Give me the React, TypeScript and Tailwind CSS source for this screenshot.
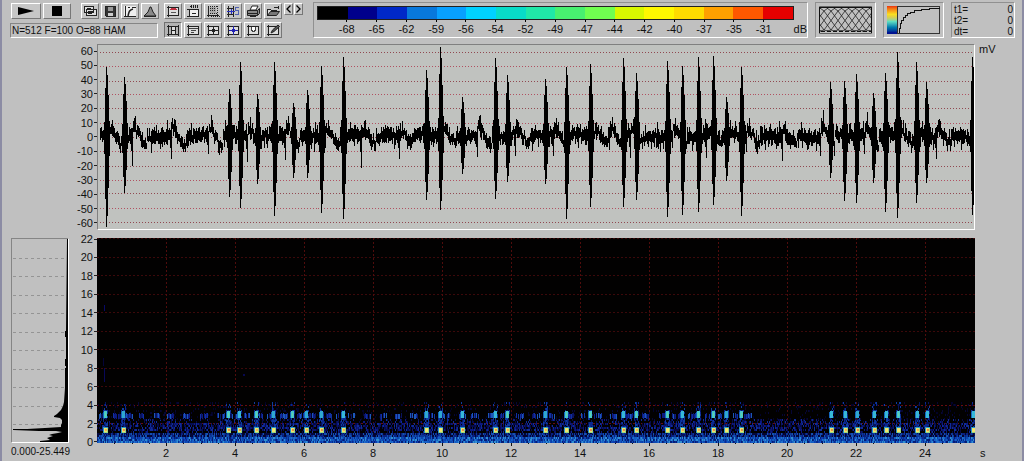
import type { ReactNode } from "react";

const PLOT_W = 878;
const WAVE_H = 186;
const SPEC_H = 205;
const DURATION = 25.449;
const ZERO_Y = 92;

const scale = [
  { color: "#000000", label: "-68" },
  { color: "#00008c", label: "-65" },
  { color: "#0028c8", label: "-62" },
  { color: "#0878dc", label: "-59" },
  { color: "#08a0ff", label: "-56" },
  { color: "#00d2ff", label: "-54" },
  { color: "#08dcc8", label: "-52" },
  { color: "#20e8a8", label: "-49" },
  { color: "#48f070", label: "-47" },
  { color: "#70ff50", label: "-44" },
  { color: "#d8f800", label: "-42" },
  { color: "#fff800", label: "-40" },
  { color: "#ffdc00", label: "-37" },
  { color: "#ffa000", label: "-35" },
  { color: "#ff5800", label: "-31" },
  { color: "#e60000", label: "" },
];

const millivolts = [60, 50, 40, 30, 20, 10, 0, -10, -20, -30, -40, -50, -60];
const kilohertz = [22, 20, 18, 16, 14, 12, 10, 8, 6, 4, 2, 0];
const seconds = [2, 4, 6, 8, 10, 12, 14, 16, 18, 20, 22, 24];

// [x, height above zero, depth below zero]
const calls = [
  [8, 70, 92], [26, 60, 58], [131, 48, 62], [142, 75, 73], [159, 42, 49],
  [176, 75, 81], [195, 33, 42], [209, 47, 42], [224, 71, 78], [246, 80, 84],
  [329, 67, 65], [343, 90, 75], [365, 39, 38], [398, 79, 64], [410, 62, 46],
  [448, 58, 49], [469, 70, 84], [493, 73, 72], [526, 79, 72], [539, 64, 65],
  [570, 76, 82], [585, 71, 80], [601, 80, 77], [616, 81, 70], [629, 39, 45],
  [644, 70, 81], [734, 55, 42], [748, 56, 66], [760, 63, 68], [777, 43, 48],
  [789, 64, 77], [801, 85, 83], [820, 75, 68], [830, 55, 48], [876, 80, 80],
];

// short background pulses: a dip followed by a rise and a slow decay
const pulses = [
  [11, 10, 16], [34, 30, 20], [73, 23, 17], [110, 18, 21], [149, 26, 19],
  [187, 24, 20], [228, 12, 16], [264, 32, 15], [302, 23, 15], [345, 10, 14],
  [380, 21, 21], [418, 20, 14], [456, 20, 18], [496, 10, 14], [512, 14, 19],
  [533, 22, 17], [575, 12, 18], [609, 22, 9], [649, 16, 18], [686, 25, 15],
  [724, 20, 26], [738, 20, 10], [768, 18, 24], [804, 8, 16], [840, 23, 17],
];

function createRandom(seed: number) {
  let state = seed;
  return () => {
    state = (state + 0x6d2b79f5) | 0;
    let t = Math.imul(state ^ (state >>> 15), 1 | state);
    t = (t + Math.imul(t ^ (t >>> 7), 61 | t)) ^ t;
    return ((t ^ (t >>> 14)) >>> 0) / 4294967296;
  };
}

function buildWave() {
  const random = createRandom(41);
  const high: number[] = [];
  const low: number[] = [];
  for (let x = 0; x < PLOT_W; x++) {
    const drift = 1.5 * Math.sin(x / 5) + (random() - 0.5) * 5;
    high.push(3 + random() * 5 + (random() > 0.7 ? random() * 8 : 0) + drift);
    low.push(3 + random() * 5 + (random() > 0.7 ? random() * 8 : 0) - drift);
  }
  for (const [x, dip, rise] of pulses) {
    for (let i = 1; i < 15 && x + i < PLOT_W; i++) {
      const drift = (rise / 2.4) * Math.cos((i / 14) * Math.PI) + (random() - 0.5) * 5;
      high[x + i] = high[x + i] * 0.8 + drift;
      low[x + i] = low[x + i] * 0.8 - drift;
    }
    high[x + 3] = rise;
    low[x] = dip;
    low[x - 1] = dip * 0.5;
  }
  const shape = [0.2, 0.7, 1, 0.88, 0.58, 0.22];
  for (const [x, up, down] of calls) {
    shape.forEach((k, i) => {
      const at = x + i - 2;
      if (at < 0 || at >= PLOT_W) return;
      high[at] = Math.max(high[at], up * k);
      low[at] = Math.max(low[at], down * k);
    });
  }
  let d = "";
  for (let x = 2; x < PLOT_W; x++) {
    const top = Math.round(ZERO_Y - high[x]);
    const bottom = Math.max(top + 4, Math.round(ZERO_Y + low[x]));
    d += `M${x} ${top}V${bottom}h1V${top}z`;
  }
  return d;
}

function buildSpectrogram() {
  const random = createRandom(7);
  const layers: { color: string; d: string }[] = [];
  const dot = (color: string, x: number, y: number, w = 1, h = 2) => {
    const d = `M${x} ${y}h${w}v${h}h-${w}z`;
    const same = layers.find((layer) => layer.color === color);
    if (same) same.d += d;
    else layers.push({ color, d });
  };
  const pick = (colors: string[]) => colors[Math.floor(random() * colors.length)];

  for (let x = 0; x < PLOT_W; x++) {
    for (let y = 195; y < 205; y += 2) {
      dot(
        y < 199
          ? pick(["#04083c", "#082080", "#0c3898", "#1450b0", "#040430"])
          : pick(["#0c3cb0", "#1458c0", "#2070cc", "#3090d0", "#0c48b0", "#041c78", "#1460c4", "#082c90"]),
        x,
        y
      );
    }
    for (let y = 181; y < 195; y += 2) {
      const density = y > 184 && y < 193 ? 0.62 : 0.28;
      if (random() < density) dot(pick(["#040c50", "#0c1880", "#102c98", "#080840", "#0c1468"]), x, y);
    }
    for (let y = 164; y < 181; y += 2) {
      if (random() < 0.1) dot(pick(["#020228", "#060634"]), x, y);
    }
  }

  // faint harmonics near 3 kHz
  for (let x = 2; x < 648; x += 12 + Math.floor(random() * 6)) {
    for (let i = 0; i < 8; i++) {
      if (random() < 0.8) dot(pick(["#0c1a80", "#1030a0", "#1c58b8", "#0a1460"]), x + i, 175 + Math.floor(random() * 2), 1, 5);
    }
  }

  for (const [x] of calls) {
    for (let y = 164; y < 197; y += 2) {
      for (let i = -2; i < 3; i++) {
        const near = y > 170 ? 0.65 : 0.2;
        if (random() < near) dot(pick(["#06145c", "#0a2890", "#0e3ca0"]), x + i, y);
      }
    }
    dot("#1468c0", x - 2, 174, 4, 6);
    dot(pick(["#38b8d8", "#30a8d0", "#48c8c8"]), x - 1, 173, 3, 7);
    dot("#68d0a8", x, 175, 1, 3);
    dot("#2898c8", x - 2, 189, 5, 6);
    dot("#98d880", x - 1, 190, 4, 5);
    dot("#f0e070", x - 1, 190, 3, 4);
    dot(pick(["#e89048", "#f8e868", "#f0b050"]), x, 191, 2, 2);
  }

  dot("#080868", 7, 67, 1, 6);
  dot("#080858", 7, 130, 1, 14);
  dot("#040438", 6, 120, 1, 8);
  dot("#080850", 146, 136, 2, 2);
  return layers;
}

const wavePath = buildWave();
const spectrogram = buildSpectrogram();

function ToolButton({
  label,
  pressed,
  className = "h-4 w-[18px]",
  children,
}: {
  label: string;
  pressed?: boolean;
  className?: string;
  children: ReactNode;
}) {
  const edge = pressed
    ? "border-t-[#707070] border-l-[#707070] border-r-white border-b-white bg-[#b4b4b4]"
    : "border-t-white border-l-white border-r-[#777777] border-b-[#777777] bg-[#c6c6c6]";
  return (
    <button
      type="button"
      aria-label={label}
      aria-pressed={pressed}
      className={`flex shrink-0 items-center justify-center border ${edge} ${className}`}
    >
      {children}
    </button>
  );
}

function Glyph({ children }: { children: ReactNode }) {
  return (
    <svg viewBox="0 0 14 13" className="h-[13px] w-3.5" fill="none" stroke="#222" shapeRendering="crispEdges" aria-hidden>
      {children}
    </svg>
  );
}

const frame = <path d="M2.5 1v11M1 10.5h12M12.5 2v9M1 2.5h12" />;
const paper = <path d="M3 3h9v7H3z" fill="#ddd" stroke="none" />;

const topTools: { label: string; icon: ReactNode }[] = [
  {
    label: "Options",
    icon: (
      <>
        {paper}
        {frame}
        <path d="M4 4.5h7M5 3.5h5" stroke="#c03040" />
        <path d="M5 7.5h5" stroke="#555" />
      </>
    ),
  },
  {
    label: "Time scale",
    icon: (
      <>
        <path d="M4 5h8v6H4z" fill="#eee" stroke="none" />
        <path d="M5.5 0v3M4 1.5h2M7.5 0v3M9.5 0v3M11.5 0v3M1 4.5h12M3.5 4v8M12.5 4v8M1 11.5h12M6 8.5h4" />
      </>
    ),
  },
  {
    label: "Select range",
    icon: (
      <>
        <path d="M4 2h6v7H4z" fill="#aaa" stroke="none" />
        <path d="M2.5 1v11M1 10.5h12" />
        <path d="M4 1.5h8M4 3.5h6M4 5.5h6M4 8.5h8M11.5 1v10M5 11.5h9" strokeDasharray="1 1" />
      </>
    ),
  },
  {
    label: "Synchronize",
    icon: (
      <>
        <path d="M2.5 1v11M1 3.5h6M1 9.5h6M7.5 1v11" />
        <path d="M1 6.5h8M5.5 4v5" stroke="#2830c0" />
        <path d="M13 2.5H9.5v3h3v4H9" stroke="#5060b0" />
      </>
    ),
  },
  {
    label: "Print",
    icon: (
      <>
        <path d="M4 5l2-4h6l-2 4z" fill="#fff" shapeRendering="auto" />
        <path d="M1.5 5.5h10v5h-10zM11.5 5.5l2-2v5l-2 2" fill="#888" shapeRendering="auto" />
        <path d="M2 8.5h9M4 11.5h6" />
      </>
    ),
  },
  {
    label: "Open",
    icon: (
      <>
        <path d="M1.5 10.5v-6h3l1 1h5v2" fill="#ddd" />
        <path d="M1.5 10.5l3-4h9l-3 4z" fill="#777" shapeRendering="auto" />
        <path d="M8 2.5h4M12.5 1v3" />
      </>
    ),
  },
];

const bottomTools: { label: string; icon: ReactNode }[] = [
  {
    label: "Vertical cursors",
    icon: (
      <>
        <path d="M6 2h3v8H6z" fill="#ddd" stroke="none" />
        <path d="M2.5 1v11M5.5 2v9M9.5 2v9M12.5 1v11M1 2.5h12M1 10.5h12M6 6.5h3" />
      </>
    ),
  },
  {
    label: "Horizontal cursors",
    icon: (
      <>
        {paper}
        {frame}
        <path d="M3 4.5h9M5 6.5h5M5 8.5h3" stroke="#444" />
      </>
    ),
  },
  {
    label: "Crosshair",
    icon: (
      <>
        {paper}
        {frame}
        <path d="M7.5 2v9M3 6.5h9M6.5 5v3M8.5 5v3" />
      </>
    ),
  },
  {
    label: "Crosshair pair",
    icon: (
      <>
        {paper}
        {frame}
        <path d="M7.5 2v9M3 6.5h9M6.5 5v3M8.5 5v3" stroke="#2020b0" />
      </>
    ),
  },
  {
    label: "Marker",
    icon: (
      <>
        {paper}
        {frame}
        <path d="M5.5 3v3l1 1h2l1-1V3" fill="#fff" stroke="#444" />
      </>
    ),
  },
  {
    label: "Annotate",
    icon: (
      <>
        {paper}
        {frame}
        <path d="M5 9l1.5-3L12 1l1.5 1.5L8 7.5z" fill="#555" shapeRendering="auto" />
      </>
    ),
  },
];

function Toolbar() {
  return (
    <div className="flex shrink-0 pt-px">
      <div className="flex w-[148px] flex-col justify-between">
        <div className="flex pl-px">
          <ToolButton label="Play" className="h-4 w-[30px]">
            <svg viewBox="0 0 16 8" className="h-2 w-4" aria-hidden>
              <path d="M0 0l16 4L0 8z" />
            </svg>
          </ToolButton>
          <ToolButton label="Stop" className="ml-0.5 h-4 w-7">
            <span className="size-2.5 bg-black" />
          </ToolButton>
          <div className="ml-2.5 flex gap-0.5">
            <ToolButton label="Copy window">
              <Glyph>
                <path d="M1.5 1.5h9v6h-9zM3.5 4.5h10v6h-10z" fill="#ddd" />
                <path d="M5 6.5h6M5 8.5h4M4 3.5h4" />
              </Glyph>
            </ToolButton>
            <ToolButton label="Save">
              <Glyph>
                <path d="M2.5 1.5h10v10h-9l-1-1z" fill="#333" />
                <path d="M5 2h5v4H5z" fill="#999" stroke="none" />
                <path d="M5 8h5v3H5z" fill="#ccc" stroke="none" />
              </Glyph>
            </ToolButton>
            <ToolButton label="Gain curve">
              <Glyph>
                <path d="M1 1h12v11H1z" fill="#eee" stroke="none" />
                <path d="M2.5 1v11M1 11.5h12M5 2.5h2M9 2.5h4" />
                <path d="M5 11c1-4 1-6 5-7" strokeWidth="1.5" shapeRendering="auto" />
              </Glyph>
            </ToolButton>
            <ToolButton label="Spectrum">
              <Glyph>
                <path d="M1 11l4-4 2-5h1l2 5 3 4z" fill="#888" shapeRendering="auto" />
                <path d="M1 11.5h12" />
              </Glyph>
            </ToolButton>
          </div>
        </div>
        <div className="border border-t-[#858585] border-r-white border-b-white border-l-[#858585] pl-px text-[10px] leading-[13px] whitespace-nowrap">
          N=512 F=100 O=88 HAM
        </div>
      </div>
      <div className="ml-1.5 grid grid-cols-6 content-between gap-0.5">
        {topTools.map((tool) => (
          <ToolButton key={tool.label} label={tool.label}>
            <Glyph>{tool.icon}</Glyph>
          </ToolButton>
        ))}
        {bottomTools.map((tool, i) => (
          <ToolButton key={tool.label} label={tool.label} pressed={i === 0}>
            <Glyph>{tool.icon}</Glyph>
          </ToolButton>
        ))}
      </div>
      <div className="ml-0.5 flex gap-px">
        <ToolButton label="Previous" className="h-3 w-[9px]">
          <svg viewBox="0 0 5 8" className="h-2 w-[5px]" fill="none" stroke="#000" strokeWidth="1.3" aria-hidden>
            <path d="M4.5 0.5L1 4l3.5 3.5" />
          </svg>
        </ToolButton>
        <ToolButton label="Next" className="h-3 w-[9px]">
          <svg viewBox="0 0 5 8" className="h-2 w-[5px]" fill="none" stroke="#000" strokeWidth="1.3" aria-hidden>
            <path d="M0.5 0.5L4 4L0.5 7.5" />
          </svg>
        </ToolButton>
      </div>
    </div>
  );
}

function Panel({ className, children }: { className: string; children: ReactNode }) {
  return (
    <div className={`border border-t-[#909090] border-r-white border-b-white border-l-[#909090] ${className}`}>
      {children}
    </div>
  );
}

function ColorScale() {
  return (
    <Panel className="ml-2.5 flex min-w-0 flex-1 pt-[3px] pl-[3px]">
      <div className="min-w-0 flex-1">
        <div className="flex border border-[#202020]">
          {scale.map(({ color }) => (
            <span key={color} className="h-3 flex-1" style={{ backgroundColor: color }} />
          ))}
        </div>
        <div className="flex">
          <span className="min-w-0 flex-1" />
          {scale.slice(0, 15).map(({ label }) => (
            <div key={label} className="flex min-w-0 flex-[2] flex-col items-center">
              <span className="h-0.5 w-px bg-black" />
              <span className="leading-[14px]">{label}</span>
            </div>
          ))}
          <span className="min-w-0 flex-1" />
        </div>
      </div>
      <span className="pt-4 leading-[14px]">dB</span>
    </Panel>
  );
}

function Lattice() {
  const lines = [-2, -1, 0, 1, 2, 3, 4, 5, 6, 7, 8];
  return (
    <Panel className="w-[61px] p-[3px]">
      <svg viewBox="0 0 53 28" className="h-7 w-full" fill="none" stroke="#222" aria-hidden>
        {lines.map((i) => (
          <path key={i} d={`M${i * 7 - 6} 2l4 3l14 19l4 1M${i * 7 + 16} 2l-4 3l-14 19l-4 1`} strokeWidth="0.8" />
        ))}
        <path d="M0.5 0.5h52v27h-52z" stroke="#666" />
        <path d="M0 1.5h53M0.5 1v26M52.5 1v26" stroke="#111" />
        <path d="M2 25.5h50" stroke="#111" strokeDasharray="4 2" />
      </svg>
    </Panel>
  );
}

function Transfer() {
  return (
    <Panel className="flex w-[61px] p-[3px]">
      <div className="h-7 w-2.5 bg-linear-to-b from-[#e03018] via-[#60e0c0] to-[#001090] from-5% via-55% to-95%">
        <div className="h-full bg-linear-to-b from-[#e83010] via-[#f8e020] via-30% to-transparent to-55%" />
      </div>
      <svg viewBox="0 0 43 28" className="h-7 flex-1" fill="none" stroke="#111" shapeRendering="crispEdges" aria-hidden>
        <path d="M0.5 0.5h42v27h-42z" stroke="#333" />
        <path d="M2.5 27v-5h1v-5h1v-3h2v-3h2v-2h2v-2h3v-1h4v-2h7v-1h8v-1h10" />
      </svg>
    </Panel>
  );
}

function Readout() {
  return (
    <Panel className="w-16 pt-px pr-px pl-0.5 text-[10px]">
      <dl className="grid grid-cols-[1fr_auto] leading-[11px]">
        {["t1=", "t2=", "dt="].map((name) => (
          <div key={name} className="contents">
            <dt>{name}</dt>
            <dd>0</dd>
          </div>
        ))}
      </dl>
    </Panel>
  );
}

function Axis({ values, className }: { values: number[]; className: string }) {
  return (
    <div className={`flex flex-col justify-between leading-[14px] ${className}`}>
      {values.map((value) => (
        <div key={value} className="flex items-center justify-end gap-px">
          <span>{value}</span>
          <span className="h-px w-[3px] bg-[#222]" />
        </div>
      ))}
    </div>
  );
}

function Waveform() {
  return (
    <div className="grid grid-cols-[95px_minmax(0,1fr)_47px]">
      <Axis values={millivolts} className="h-[186px]" />
      <div className="h-[186px] border border-t-[#808080] border-r-white border-b-white border-l-[#808080] bg-[#c0c2bf]">
        <svg
          viewBox={`0 0 ${PLOT_W} ${WAVE_H}`}
          preserveAspectRatio="none"
          className="h-full w-full"
          role="img"
          aria-label="Waveform"
        >
          {millivolts.map((mv, i) => (
            <path
              key={mv}
              d={`M2 ${Math.round(7 + (i * 172) / 12) + 0.5}H${PLOT_W}`}
              stroke={i % 2 ? "#b05060" : "#904850"}
              strokeDasharray="1 2"
              shapeRendering="crispEdges"
            />
          ))}
          <path d={wavePath} fill="#000" shapeRendering="crispEdges" />
        </svg>
      </div>
      <span className="pl-1 leading-[10px]">mV</span>
    </div>
  );
}

function AverageSpectrum() {
  return (
    <div className="mt-1.5 pl-[9px]">
      <div className="h-[205px] border border-t-[#858585] border-r-white border-b-white border-l-[#858585]">
        <svg viewBox="0 0 56 203" className="h-full w-full" preserveAspectRatio="none" aria-hidden>
          {kilohertz.slice(1, 11).map((khz, i) => (
            <path key={khz} d={`M1 ${Math.round((i + 1) * 18.5) + 0.5}h53`} stroke="#949494" strokeDasharray="3 3" />
          ))}
          <path d="M55 0h1v203H28v-1l10-1-3-2 6-2-4-1 3-1 6-1 4-1-6-1-17 0-26-1v-1l14 0 18-1 16-1v-2l1-2v-3l-2-2-6-1v-1l3-2 2-2 2-2 2-4 1-4 1-14v-20h1v-2h-1v-7h1v-22h-1v-6h1z" />
        </svg>
      </div>
      <div className="pt-[3px] text-[10px] leading-3 whitespace-nowrap">0.000-25.449</div>
    </div>
  );
}

function Spectrogram() {
  const pxPerSecond = PLOT_W / DURATION;
  const ticks = Array.from({ length: 50 }, (_, i) => (i + 1) / 2);
  return (
    <div className="mt-0.5 grid grid-cols-[67px_28px_minmax(0,1fr)_47px]">
      <AverageSpectrum />
      <Axis values={kilohertz} className="h-[217px]" />
      <div className="pt-1.5">
        <svg
          viewBox={`0 0 ${PLOT_W} ${SPEC_H}`}
          preserveAspectRatio="none"
          className="h-[205px] w-full bg-[#020101]"
          shapeRendering="crispEdges"
          role="img"
          aria-label="Spectrogram"
        >
          {kilohertz.slice(0, 11).map((khz, i) => (
            <path
              key={khz}
              d={`M0 ${Math.round(i * 18.5) + 0.5}H${PLOT_W}`}
              stroke={i > 8 ? "#680c10" : "#3c080a"}
              strokeDasharray="2 2"
            />
          ))}
          {seconds.map((s) => (
            <path
              key={s}
              d={`M${Math.round(s * pxPerSecond) + 0.5} 0V${SPEC_H}`}
              stroke="#500c0c"
              strokeDasharray="2 2"
            />
          ))}
          {spectrogram.map(({ color, d }) => (
            <path key={color} d={d} fill={color} />
          ))}
        </svg>
        <svg viewBox={`0 0 ${PLOT_W} 4`} preserveAspectRatio="none" className="h-1 w-full" shapeRendering="crispEdges" aria-hidden>
          {ticks.map((t) => (
            <path key={t} d={`M${Math.round(t * pxPerSecond) + 0.5} 0v${t % 2 ? 1 : 3}`} stroke="#111" />
          ))}
        </svg>
        {/* grow factors are milliseconds, so the labels stay centred on their ticks */}
        <div className="flex text-center leading-3">
          <span className="flex-[1000]" />
          {seconds.map((s) => (
            <span key={s} className="min-w-0 flex-[2000]">
              {s}
            </span>
          ))}
          <span className="flex-[449]" />
        </div>
      </div>
      <span className="self-end pl-[5px] leading-3">s</span>
    </div>
  );
}

export default function App() {
  return (
    <main className="min-h-screen border-x-2 border-[#8c8ca4] bg-[#c0c0c0] font-['Liberation_Sans',Arial,sans-serif] text-[11px] text-[#111]">
      <header className="flex items-stretch pt-0.5 pr-[7px] pb-1.5 pl-2">
        <Toolbar />
        <ColorScale />
        <div className="ml-[7px] flex h-9 gap-[7px]">
          <Lattice />
          <Transfer />
          <Readout />
        </div>
      </header>
      <Waveform />
      <Spectrogram />
    </main>
  );
}
